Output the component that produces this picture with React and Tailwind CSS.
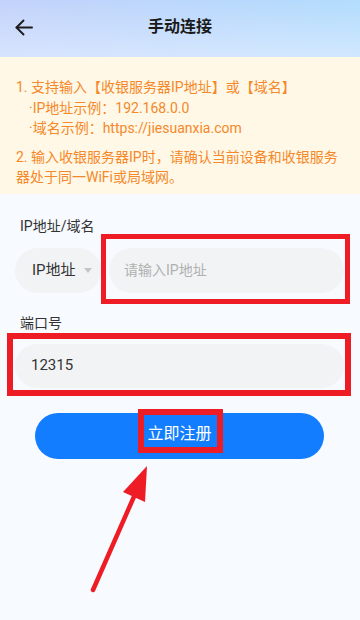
import React from "react";

export default function App() {
  const font = { fontFamily: 'Roboto, "Noto Sans CJK SC", "Noto Sans", sans-serif' };
  return (
    <div
      className="relative w-[360px] h-[620px] overflow-hidden bg-[#f7faff]"
      style={font}
    >
      {/* Header */}
      <div className="relative h-[57px] flex items-center justify-center bg-[linear-gradient(to_right,#c3d2fb,#b2dcfd)]">
        <div className="absolute inset-0 bg-[linear-gradient(to_bottom,rgba(255,255,255,0),rgba(230,240,255,0.6))]" />
        <svg
          className="absolute left-[14px] top-[18px]"
          width="20"
          height="20"
          viewBox="0 0 20 20"
          fill="none"
          stroke="#1c1c1c"
          strokeWidth="1.9"
          strokeLinecap="round"
          strokeLinejoin="round"
        >
          <path d="M2.5 9.5H18" />
          <path d="M9.5 2.5L2.5 9.5L9.5 16.5" />
        </svg>
        <span className="relative text-[16px] font-bold text-[#1a1a1a] leading-none -mt-[4px]">
          手动连接
        </span>
      </div>

      {/* Notice */}
      <div className="bg-[#fff8e6] pl-[16px] pr-[12px] pt-[20px] pb-[6px] text-[14px] leading-[20.5px] text-[#f5882a]">
        <p>1. 支持输入【收银服务器IP地址】或【域名】</p>
        <p className="pl-[13px]">·IP地址示例：192.168.0.0</p>
        <p className="pl-[13px]">·域名示例：https://jiesuanxia.com</p>
        <p className="mt-[8px]">
          2. 输入收银服务器IP时，请确认当前设备和收银服务
          <br />
          器处于同一WiFi或局域网。
        </p>
      </div>

      {/* Form */}
      <div className="pl-[15px] pr-[16px] pt-[22px]">
        <div className="pl-[5px] text-[14px] leading-[20px] text-[#333333]">IP地址/域名</div>
        <div className="mt-[12px] flex gap-[8px]">
          <div className="w-[86px] h-[45px] rounded-full bg-[#f2f3f5] flex items-center pl-[17px]">
            <span className="text-[15px] text-[#333333]">IP地址</span>
            <svg className="ml-[8px]" width="8" height="5" viewBox="0 0 8 5">
              <path d="M0 0H8L4 5Z" fill="#c4c4c4" />
            </svg>
          </div>
          <div className="relative flex-1">
            <div className="h-[45px] rounded-full bg-[#f2f3f5] flex items-center pl-[15px] text-[14px] text-[#b0b0b0]">
              请输入IP地址
            </div>
            <div className="absolute left-[-8px] right-[-6px] top-[-14px] bottom-[-11px] border-[5px] border-[#ee1c25]" />
          </div>
        </div>

        <div className="mt-[20px] pl-[5px] text-[14px] leading-[20px] text-[#333333]">端口号</div>
        <div className="relative mt-[11px]">
          <div className="h-[44px] rounded-full bg-[#f2f3f5] flex items-center pl-[16px] text-[15px] text-[#333333]">
            12315
          </div>
          <div className="absolute left-[-8px] right-[-7px] top-[-11px] bottom-[-8px] border-[6px] border-[#ee1c25]" />
        </div>

        <div className="mt-[25px] px-[20px]">
          <div className="h-[46px] rounded-full bg-[#137dff] flex items-center justify-center">
            <span className="relative text-[16px] text-white leading-none -mt-[4px]">
              立即注册
              <span className="absolute left-[-9px] right-[-11px] top-[-17px] bottom-[-11px] border-[6px] border-[#ee1c25]" />
            </span>
          </div>
        </div>
      </div>

      {/* Annotation arrow */}
      <svg className="absolute left-0 top-0" width="360" height="620" viewBox="0 0 360 620">
        <line x1="93" y1="590" x2="136" y2="492" stroke="#ee1c25" strokeWidth="4.5" strokeLinecap="round" />
        <path d="M147 466L123 492L145 502Z" fill="#ee1c25" />
      </svg>
    </div>
  );
}
